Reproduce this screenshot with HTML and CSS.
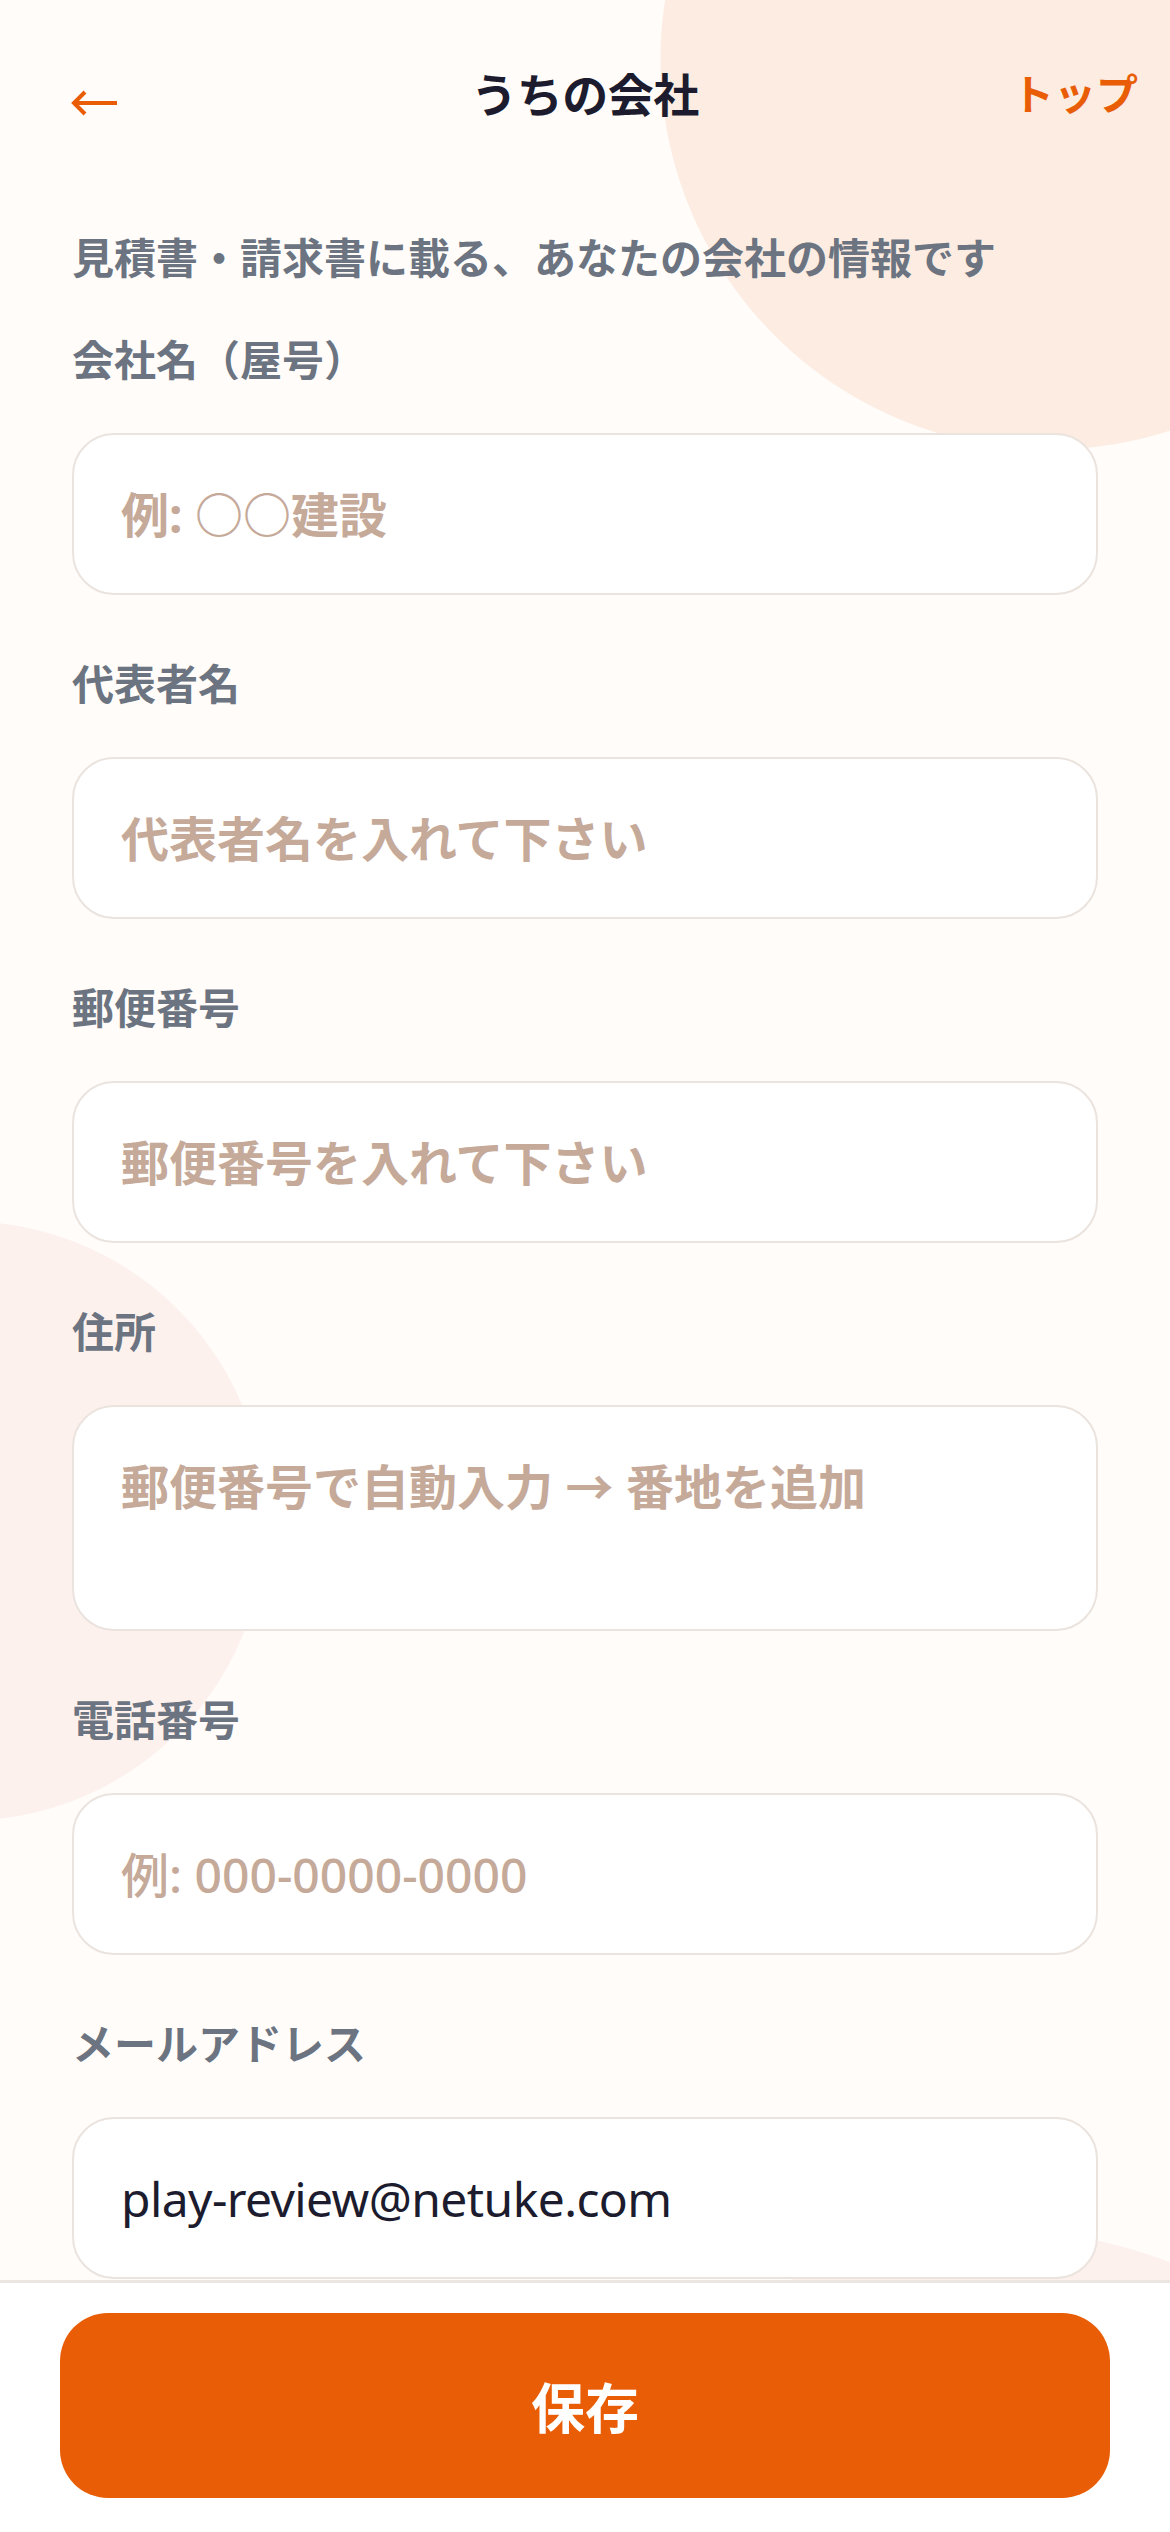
FILE: index.html
```html
<!DOCTYPE html>
<html lang="ja">
<head>
<meta charset="utf-8">
<meta name="viewport" content="width=1170">
<title>うちの会社</title>
<link rel="stylesheet" href="styles.css">
</head>
<body>
<div class="screen">
  <main class="main">
    <header class="top-bar">
      <button class="back" type="button" aria-label="戻る">
        <svg class="back-icon" width="48" height="26" viewBox="0 0 48 26" aria-hidden="true">
          <path d="M46 13H3M14 2L3 13l11 11" fill="none" stroke="#E85D05" stroke-width="4" stroke-linecap="butt" stroke-linejoin="miter"/>
        </svg>
      </button>
      <h1 class="title">うちの会社</h1>
      <a class="top-link" href="#">トップ</a>
    </header>

    <p class="lead">見積書・請求書に載る、あなたの会社の情報です</p>

    <form class="form">
      <div class="field">
        <label class="label" for="company">会社名（屋号）</label>
        <input class="input" id="company" type="text" placeholder="例: ○○建設">
      </div>
      <div class="field">
        <label class="label" for="rep">代表者名</label>
        <input class="input" id="rep" type="text" placeholder="代表者名を入れて下さい">
      </div>
      <div class="field">
        <label class="label" for="zip">郵便番号</label>
        <input class="input" id="zip" type="text" placeholder="郵便番号を入れて下さい">
      </div>
      <div class="field">
        <label class="label" for="addr">住所</label>
        <textarea class="input textarea" id="addr" placeholder="郵便番号で自動入力 → 番地を追加"></textarea>
      </div>
      <div class="field">
        <label class="label" for="tel">電話番号</label>
        <input class="input input-latin" id="tel" type="tel" placeholder="例: 000-0000-0000">
      </div>
      <div class="field">
        <label class="label" for="mail">メールアドレス</label>
        <input class="input input-email" id="mail" type="email" value="play-review@netuke.com">
      </div>
    </form>
  </main>

  <footer class="bottom-bar">
    <button class="save" type="button">保存</button>
  </footer>
</div>
</body>
</html>
```

FILE: styles.css
```css
html, body {
  margin: 0;
  padding: 0;
}

body {
  width: 1170px;
  height: 2532px;
  overflow: hidden;
  font-family: "Noto Sans", "Noto Sans CJK JP", sans-serif;
  background-color: #FFFCFA;
  background-image:
    radial-gradient(circle 390px at 1050px 60px, #FCECE1 389px, rgba(252, 236, 225, 0) 390px),
    radial-gradient(circle 300px at -34px 1521px, #FDF1EE 299px, rgba(253, 241, 238, 0) 300px),
    radial-gradient(circle 470px at 1000px 2700px, #FCF1EC 469px, rgba(252, 241, 236, 0) 470px);
  background-repeat: no-repeat;
}

.screen {
  display: flex;
  flex-direction: column;
  height: 2532px;
}

.main {
  flex: 1 1 auto;
  overflow: hidden;
  min-height: 0;
}

.top-bar {
  display: grid;
  grid-template-columns: 1fr auto 1fr;
  align-items: center;
  height: 188px;
  padding: 0 32px;
  box-sizing: border-box;
}

.back {
  justify-self: start;
  align-self: start;
  margin: 90px 0 0 39px;
  padding: 0;
  border: none;
  background: none;
  display: flex;
  line-height: 0;
}

.title {
  margin: 0;
  font-size: 46px;
  line-height: 1;
  font-weight: 700;
  color: #1C1C2E;
  letter-spacing: -0.5px;
}

.top-link {
  justify-self: end;
  font-size: 42px;
  line-height: 1;
  font-weight: 700;
  color: #E85D05;
  text-decoration: none;
}

.lead {
  margin: 40px 72px 0;
  font-size: 42px;
  line-height: 60px;
  font-weight: 700;
  color: #6B7480;
}

.form {
  margin: 42px 72px 0;
  display: flex;
  flex-direction: column;
}

.field {
  display: flex;
  flex-direction: column;
  margin-bottom: 59px;
}

.label {
  font-size: 42px;
  line-height: 60px;
  font-weight: 700;
  color: #6B7480;
  margin-bottom: 43px;
}

.input {
  display: block;
  box-sizing: border-box;
  width: 100%;
  height: 162px;
  margin: 0;
  padding: 0 47px;
  border: 2px solid #EAE3DE;
  border-radius: 42px;
  background: #FFFFFF;
  font-family: "Noto Sans", "Noto Sans CJK JP", sans-serif;
  font-size: 48px;
  font-weight: 400;
  color: #1C1C2E;
  outline: none;
}

.input::placeholder {
  color: #C5A999;
  font-weight: 700;
  opacity: 1;
}

.input-latin::placeholder {
  font-weight: 500;
}

.input-email {
  letter-spacing: -0.6px;
}

.textarea {
  height: 226px;
  padding: 44px 47px;
  line-height: 72px;
  resize: none;
  overflow: hidden;
}

.bottom-bar {
  flex: 0 0 auto;
  background: #FFFFFF;
  border-top: 3px solid #ECE6E2;
  padding: 30px 60px 34px;
}

.save {
  display: block;
  width: 100%;
  height: 185px;
  border: none;
  border-radius: 48px;
  background: #E85D05;
  color: #FFFFFF;
  font-family: "Noto Sans CJK JP", sans-serif;
  font-size: 54px;
  font-weight: 700;
  line-height: 1;
  padding: 0;
}
```
